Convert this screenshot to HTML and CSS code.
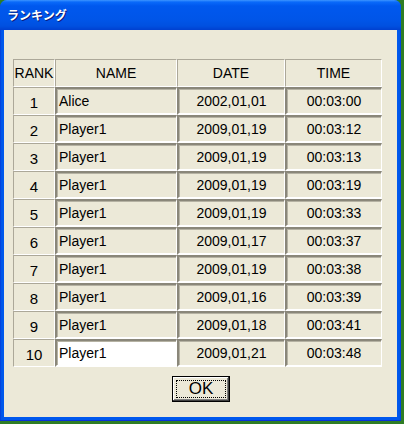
FILE: index.html
```html
<!DOCTYPE html>
<html lang="ja">
<head>
<meta charset="utf-8">
<title>ランキング</title>
<link rel="stylesheet" href="styles.css">
</head>
<body>
<div class="window">
  <div class="titlebar"><span class="title">ランキング</span></div>
  <div class="client">
    <div class="ranking">
      <div class="hcell">RANK</div><div class="hcell">NAME</div><div class="hcell">DATE</div><div class="hcell">TIME</div>

      <div class="rank">1</div><div class="cell name">Alice</div><div class="cell">2002,01,01</div><div class="cell">00:03:00</div>
      <div class="rank">2</div><div class="cell name">Player1</div><div class="cell">2009,01,19</div><div class="cell">00:03:12</div>
      <div class="rank">3</div><div class="cell name">Player1</div><div class="cell">2009,01,19</div><div class="cell">00:03:13</div>
      <div class="rank">4</div><div class="cell name">Player1</div><div class="cell">2009,01,19</div><div class="cell">00:03:19</div>
      <div class="rank">5</div><div class="cell name">Player1</div><div class="cell">2009,01,19</div><div class="cell">00:03:33</div>
      <div class="rank">6</div><div class="cell name">Player1</div><div class="cell">2009,01,17</div><div class="cell">00:03:37</div>
      <div class="rank">7</div><div class="cell name">Player1</div><div class="cell">2009,01,19</div><div class="cell">00:03:38</div>
      <div class="rank">8</div><div class="cell name">Player1</div><div class="cell">2009,01,16</div><div class="cell">00:03:39</div>
      <div class="rank">9</div><div class="cell name">Player1</div><div class="cell">2009,01,18</div><div class="cell">00:03:41</div>
      <div class="rank">10</div><div class="cell name edit">Player1</div><div class="cell">2009,01,21</div><div class="cell">00:03:48</div>
    </div>
    <div class="buttons">
      <button class="ok"><span class="focus">OK</span></button>
    </div>
  </div>
</div>
</body>
</html>
```

FILE: styles.css
```css
html, body {
  margin: 0;
  padding: 0;
}
body {
  background: #2f7d25;
  width: 404px;
  height: 424px;
  overflow: hidden;
  font-family: "Liberation Sans", Arial, sans-serif;
}
.window {
  width: 401px;
  height: 421px;
  margin: 0;
  border-radius: 7px 7px 0 0;
  background: linear-gradient(to right, #0831d9 0, #0055e5 1px, #0058ee 3px, #0058ee calc(100% - 3px), #0055e5 calc(100% - 1px), #0831d9 100%);
  display: flex;
  flex-direction: column;
  box-sizing: border-box;
  border-bottom: 1px solid #0831d9;
}
.titlebar {
  height: 30px;
  flex: none;
  border-radius: 7px 7px 0 0;
  background: linear-gradient(to bottom, #3d95ff 0, #0a6afa 2px, #0058ee 6px, #0055e8 20px, #0050e0 26px, #0040d0 30px);
  display: flex;
  align-items: center;
  padding-left: 7px;
  box-sizing: border-box;
}
.title {
  color: #fff;
  font-family: "Noto Sans CJK JP", sans-serif;
  font-weight: bold;
  font-size: 12px;
  text-shadow: 1px 1px 0 #0a1a7a;
  margin-top: -1px;
}
.client {
  flex: 1;
  margin: 0 4px 3px 4px;
  background: #ece9d8;
  padding: 29px 0 0 9px;
  box-sizing: border-box;
}
.ranking {
  display: grid;
  grid-template-columns: 42px 122px 108px 97px;
  grid-auto-rows: 28px;
  width: 369px;
  font-size: 14px;
  color: #000;
}
.hcell, .rank {
  display: flex;
  align-items: center;
  justify-content: center;
  border-top: 1px solid #aca899;
  border-left: 1px solid #aca899;
  border-right: 1px solid #fff;
  border-bottom: 1px solid #fff;
  box-sizing: border-box;
}
.rank {
  font-size: 15px;
  padding-top: 2px;
}
.cell {
  display: flex;
  align-items: center;
  justify-content: center;
  border-top: 2px solid #8a877a;
  border-left: 2px solid #8a877a;
  border-right: 1px solid #fff;
  border-bottom: 2px solid #fff;
  box-shadow: inset 1px 1px 0 #b5b2a3;
  box-sizing: border-box;
}
.cell.name {
  justify-content: flex-start;
  padding-left: 2px;
  font-size: 14px;
}
.cell.edit {
  background: #fff;
}
.buttons {
  display: flex;
  justify-content: center;
  padding-top: 9px;
  padding-right: 8px;
}
.ok {
  width: 58px;
  height: 26px;
  padding: 3px;
  background: #ece9d8;
  border: 1px solid #000;
  box-shadow: inset -1px -1px 0 #404040, inset 1px 1px 0 #fff, inset -2px -2px 0 #808080;
  font-family: "Liberation Sans", Arial, sans-serif;
  font-size: 17px;
  color: #000;
  box-sizing: border-box;
}
.focus {
  display: block;
  height: 100%;
  line-height: 16px;
  border: 1px dotted #000;
  box-sizing: border-box;
}
```
